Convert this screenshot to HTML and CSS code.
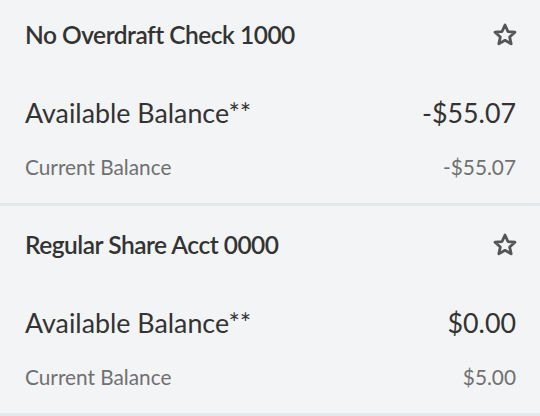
FILE: index.html
```html
<!DOCTYPE html>
<html lang="en">
<head>
  <meta charset="UTF-8">
  <title>Accounts</title>
  <link rel="stylesheet" href="styles.css">
</head>
<body>
  <div class="accounts">
    <div class="account">
      <div class="account-head">
        <h3 class="account-name">No Overdraft Check 1000</h3>
        <svg class="star" width="26" height="26" viewBox="0 0 24 24">
          <path d="M12 2.8l2.7 6 6.5.6-4.9 4.4 1.4 6.4L12 16.9l-5.7 3.3 1.4-6.4-4.9-4.4 6.5-.6z" fill="none" stroke="#555" stroke-width="2.6" stroke-linejoin="round"/>
        </svg>
      </div>
      <div class="row available">
        <span>Available Balance**</span>
        <span>-$55.07</span>
      </div>
      <div class="row current">
        <span>Current Balance</span>
        <span>-$55.07</span>
      </div>
    </div>
    <div class="account">
      <div class="account-head">
        <h3 class="account-name">Regular Share Acct 0000</h3>
        <svg class="star" width="26" height="26" viewBox="0 0 24 24">
          <path d="M12 2.8l2.7 6 6.5.6-4.9 4.4 1.4 6.4L12 16.9l-5.7 3.3 1.4-6.4-4.9-4.4 6.5-.6z" fill="none" stroke="#555" stroke-width="2.6" stroke-linejoin="round"/>
        </svg>
      </div>
      <div class="row available">
        <span>Available Balance**</span>
        <span>$0.00</span>
      </div>
      <div class="row current">
        <span>Current Balance</span>
        <span>$5.00</span>
      </div>
    </div>
  </div>
</body>
</html>
```

FILE: styles.css
```css
body {
  margin: 0;
  background-color: #f3f4f6;
  font-family: Lato, "Open Sans", sans-serif;
  color: #333;
}
.accounts {
  margin-top: -4px;
}
.account {
  height: 207px;
  padding: 0 24px 0 25px;
  border-bottom: 3px solid #e4e8ee;
}
.account-head {
  display: flex;
  justify-content: space-between;
  align-items: center;
  padding-top: 24px;
}
.account-name {
  margin: 0;
  font-size: 24.5px;
  font-weight: 600;
  letter-spacing: -0.5px;
  line-height: 30px;
}
.star {
  margin-right: -2px;
}
.row {
  display: flex;
  justify-content: space-between;
  align-items: baseline;
}
.available {
  margin-top: 47px;
  font-size: 26.8px;
  line-height: 32px;
}
.current {
  margin-top: 26px;
  font-size: 20.8px;
  line-height: 24px;
  color: #707070;
}
```
